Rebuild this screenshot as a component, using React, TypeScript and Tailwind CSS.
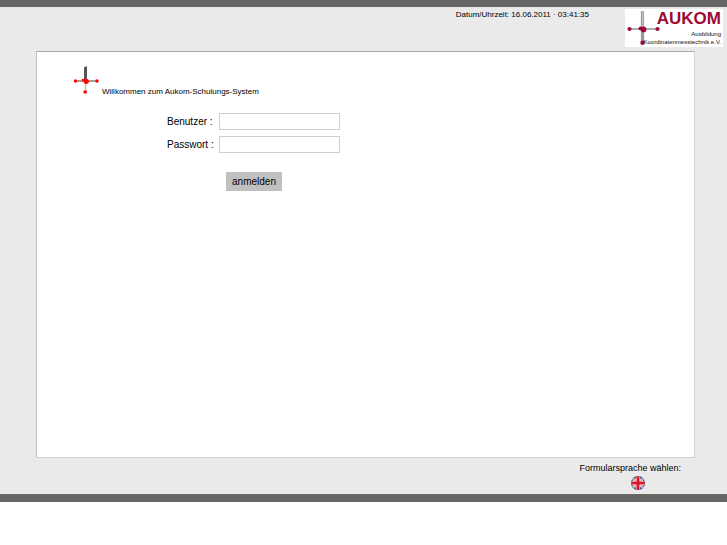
import { useState, type ReactNode } from "react";

function ProbeIcon() {
  return (
    <svg className="shrink-0" width="26" height="30" viewBox="0 0 26 30" aria-hidden="true">
      <path d="M11 1.5 14 0v15h-3z" fill="#555" />
      <path d="M2 15h22" stroke="#8b8b78" strokeWidth="1.6" />
      <path d="M12.5 16v10" stroke="#bbb" strokeWidth="1.4" />
      <circle cx="2.5" cy="15" r="1.7" fill="#f00" />
      <circle cx="24" cy="15" r="1.7" fill="#f00" />
      <circle cx="10" cy="14" r="1.2" fill="#f00" />
      <circle cx="13.2" cy="15.3" r="2.6" fill="#f00" />
      <circle cx="12.2" cy="26" r="1.8" fill="#f00" />
    </svg>
  );
}

function AukomLogo() {
  return (
    <svg className="block" width="98" height="38" viewBox="0 0 98 38" role="img" aria-label="AUKOM Ausbildung Koordinatenmesstechnik e.V.">
      <path d="M0 0h98v38H0z" fill="#fff" />
      <path d="M17.5 2v31" stroke="#999" strokeWidth="3.2" />
      <path d="M17.8 2v18" stroke="#ddd" strokeWidth="0.8" />
      <path d="M4 20h28" stroke="#888" strokeWidth="1.4" />
      <circle cx="4.5" cy="20" r="2.1" fill="#9d0b35" />
      <circle cx="32.5" cy="20" r="2.1" fill="#9d0b35" />
      <circle cx="15.5" cy="19.5" r="2" fill="#9d0b35" />
      <circle cx="18.6" cy="20.4" r="2.8" fill="#9d0b35" />
      <circle cx="17.5" cy="33.7" r="2.2" fill="#9d0b35" />
      <text x="96" y="15" fontSize="17" fontWeight="700" fill="#9d0b35" textAnchor="end">AUKOM</text>
      <g fontSize="6" fill="#111" textAnchor="end">
        <text x="96" y="27">Ausbildung</text>
        <text x="96" y="35">Koordinatenmesstechnik e.V.</text>
      </g>
    </svg>
  );
}

function EnglishFlag() {
  return (
    <svg className="block" width="14" height="14" viewBox="0 0 14 14" aria-hidden="true">
      <clipPath id="flag">
        <circle cx="7" cy="7" r="7" />
      </clipPath>
      <g clipPath="url(#flag)">
        <path d="M0 0h14v14H0z" fill="#1f4a92" />
        <path d="m0 1 14 12M14 1 0 13" stroke="#fff" strokeWidth="2.4" />
        <path d="m0 1 14 12M14 1 0 13" stroke="#d22030" strokeWidth="1" />
        <path d="M7 0v14M0 7h14" stroke="#fff" strokeWidth="4.4" />
        <path d="M7 0v14M0 7h14" stroke="#d81828" strokeWidth="3" />
      </g>
      <circle cx="7" cy="7" r="6.6" fill="none" stroke="#555" strokeOpacity="0.35" strokeWidth="0.8" />
    </svg>
  );
}

function Field({ id, label, children }: { id: string; label: string; children: ReactNode }) {
  return (
    <div className="flex items-center">
      <label htmlFor={id} className="w-[52px] whitespace-nowrap">{label}</label>
      {children}
    </div>
  );
}

export default function App() {
  const [user, setUser] = useState("");
  const [password, setPassword] = useState("");
  const inputClass = "h-[17px] w-[121px] border border-[#cfcfcf] bg-white px-1 text-[10px]";

  return (
    <div className="min-h-screen bg-white font-['Liberation_Sans',Arial,sans-serif] text-black">
      <div className="border-t-[7px] border-b-8 border-[#666] bg-[#eaeaea]">
        <header className="flex items-start justify-end pt-[2px] pr-1 pb-1">
          <p className="mr-9 text-[8px] leading-3">Datum/Uhrzeit: 16.06.2011 · 03:41:35</p>
          <AukomLogo />
        </header>

        <main className="mr-8 ml-9 min-h-[407px] border border-t-[#aaa] border-r-[#d2d2d2] border-b-[#d2d2d2] border-l-[#c0c0c0] bg-white pt-[14px] pl-9">
          <div className="flex items-end gap-[3px]">
            <ProbeIcon />
            <h1 className="text-[8px] leading-2">Willkommen zum Aukom-Schulungs-System</h1>
          </div>
          <form className="mt-[17px] ml-[94px] flex flex-col items-start gap-[6px] text-[10px]" onSubmit={(e) => e.preventDefault()}>
            <Field id="benutzer" label="Benutzer :">
              <input id="benutzer" className={inputClass} value={user} onChange={(e) => setUser(e.target.value)} />
            </Field>
            <Field id="passwort" label="Passwort :">
              <input id="passwort" type="password" className={inputClass} value={password} onChange={(e) => setPassword(e.target.value)} />
            </Field>
            <button type="submit" className="mt-[13px] ml-[59px] h-[19px] w-14 bg-[#c0c0c0]">anmelden</button>
          </form>
        </main>

        <footer className="flex justify-end pt-1 pr-[46px] pb-1">
          <div className="flex flex-col items-center gap-[2px]">
            <p className="text-[9px] leading-3">Formularsprache wählen:</p>
            <button type="button" aria-label="English" className="ml-4">
              <EnglishFlag />
            </button>
          </div>
        </footer>
      </div>
    </div>
  );
}
